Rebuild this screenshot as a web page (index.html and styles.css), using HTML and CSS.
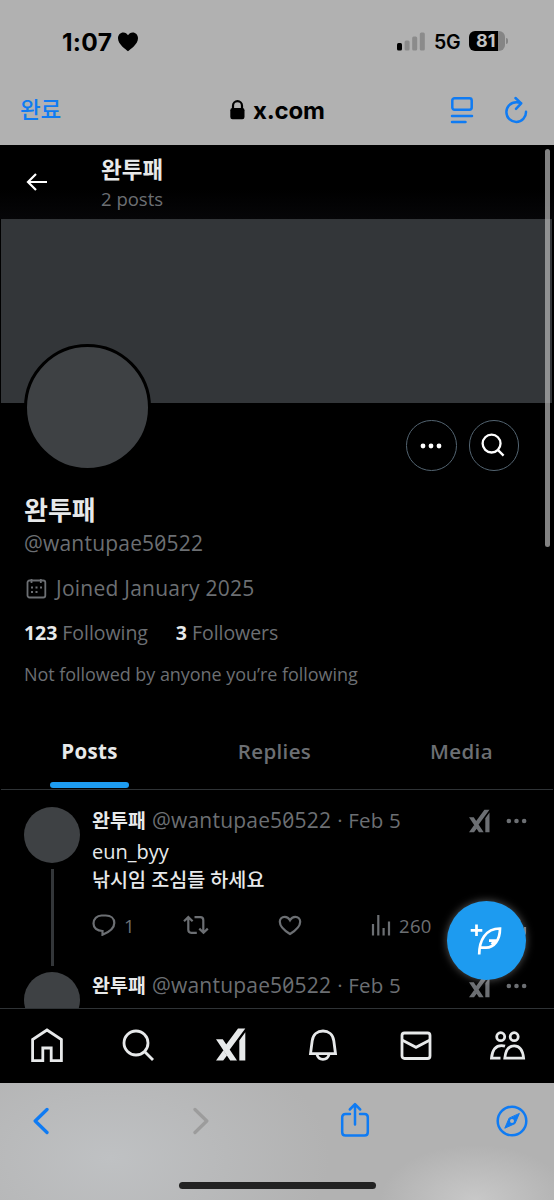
FILE: index.html
```html
<!DOCTYPE html>
<html lang="ko">
<head>
<meta charset="utf-8">
<title>완투패 - x.com</title>
<link rel="stylesheet" href="styles.css">
</head>
<body>
<svg width="0" height="0" class="defs">
  <symbol id="xai" viewBox="0 0 30 33"><path d="M0 11.300h6.800L21 32.500h-6.800zM22 .5h7.300L13.600 21.800 10 16.800zM0 32.500h7.200l3.800-5-3.600-5.300zM23.300 12.500l6-8.200v28.200h-6z"/></symbol>
  <symbol id="dots" viewBox="0 0 22 6"><circle cx="3" cy="3" r="2.400"/><circle cx="11" cy="3" r="2.400"/><circle cx="19" cy="3" r="2.400"/></symbol>
</svg>
<div class="phone">
  <header class="chrome">
    <div class="status">
      <span class="time">1:07</span>
      <svg class="heart" width="20" height="20" viewBox="0 0 20 20"><path d="M10 19.300C8 17.500 0 12.500 0 6.300 0 2.800 2.400.5 5.300.5 7.500.5 9 1.600 10 3.300 11 1.600 12.500.5 14.700.5 17.600.5 20 2.800 20 6.300c0 6.200-8 11.200-10 13z"/></svg>
      <span class="spacer"></span>
      <svg width="28" height="20" viewBox="0 0 28 20"><rect y="11" width="5" height="7.500" rx="1.500"/><g fill="#8b8b8b"><rect x="7.600" y="8.500" width="5" height="10" rx="1.500"/><rect x="15.200" y="4.500" width="5" height="14" rx="1.500"/><rect x="22.800" y=".5" width="5" height="18" rx="1.500"/></g></svg>
      <span class="net">5G</span>
      <span class="battery"><b>81</b></span><i class="nub"></i>
    </div>
    <div class="urlbar">
      <span class="done">완료</span>
      <span class="site"><svg width="15" height="20" viewBox="0 0 15 20"><path d="M3 9V5.700a4.500 4.500 0 0 1 9 0V9" fill="none" stroke="#000" stroke-width="2.200"/><rect x=".3" y="8" width="14.200" height="11.200" rx="2.200"/></svg>x.com</span>
      <svg class="tools blue" width="78" height="28" viewBox="0 0 78 28"><rect x="2.300" y="2.300" width="19.400" height="11.400" rx="2.200"/><path d="M2 20h20M2 26h13.500M76 15.800A9.800 9.800 0 1 1 66.200 6.300c2 0 3 .3 5 1M65.500 2l5.700 5.300-5.200 5.500"/></svg>
    </div>
  </header>
  <main class="app">
    <div class="topbar">
      <svg width="21" height="18" viewBox="0 0 21 18"><path d="M10 1L2 9l8 8M2 9h19" fill="none" stroke="#fff" stroke-width="2.200"/></svg>
      <div><h1>완투패</h1><p>2 posts</p></div>
    </div>
    <div class="banner"></div>
    <section class="profile">
      <div class="profile-top">
        <div class="avatar-lg"></div>
        <div class="round"><svg width="22" height="6"><use href="#dots"/></svg></div>
        <div class="round"><svg width="25" height="25" viewBox="0 0 26 26" fill="none" stroke="#fff" stroke-width="2.400"><circle cx="11" cy="11" r="9.300"/><path d="M17.500 17.500l6 6"/></svg></div>
      </div>
      <h2>완투패</h2>
      <p class="handle zero">@wantupae50522</p>
      <p class="joined"><svg width="21" height="21" viewBox="0 0 21 21"><rect x="1.500" y="2.500" width="17.800" height="17" rx="2" fill="none" stroke="#6c6f73" stroke-width="1.800"/><path d="M5.500 1v4M14.800 1v4" stroke="#6c6f73" stroke-width="1.800"/><path d="M5 9.500h2M9.500 9.500h2M14 9.500h2M5 14h2M9.500 14h2" stroke="#6c6f73" stroke-width="2"/></svg><span>Joined January 2025</span></p>
      <p class="counts"><span><b>123</b> Following</span><span><b>3</b> Followers</span></p>
      <p class="note">Not followed by anyone you’re following</p>
    </section>
    <nav class="tabs"><span class="on">Posts</span><span>Replies</span><span>Media</span></nav>
    <section class="feed">
      <article class="post">
        <div class="rail"><div class="avatar"></div><div class="thread"></div></div>
        <div class="content">
          <div class="meta"><b>완투패</b><span class="handle zero">@wantupae50522</span><span class="date">· Feb 5</span><svg class="xa" width="21" height="24"><use href="#xai"/></svg><svg width="21" height="6"><use href="#dots"/></svg></div>
          <p class="text latin">eun_byy</p>
          <p class="text">낚시임 조심들 하세요</p>
          <div class="actions">
            <span><svg width="24" height="22" viewBox="0 0 24 22"><path d="M10.500 17C5 17 1.500 14 1.500 9.500c0-4.700 3.500-8 8-8h4.300c5 0 8.500 3 8.500 7.500 0 5.500-5 9-11.800 11.800z"/></svg><em>1</em></span>
            <span><svg width="26" height="20" viewBox="0 0 26 20"><path d="M1 6.300l4.300-4.200 4.300 4.200M5.300 2.500v12.300q0 3 3 3h5.500M11.500 2.200h5.800q3 0 3 3v12.300M16.300 13.600l4.200 4.200 4.300-4.200"/></svg></span>
            <span><svg width="24" height="21" viewBox="0 0 24 21"><path d="M12 19C7 16 1.800 12 1.800 6.800c0-3 2-5 4.900-5 2.400 0 4.100 1.300 5.300 3.500 1.200-2.200 2.900-3.500 5.300-3.500 2.900 0 4.900 2 4.900 5C22.200 12 17 16 12 19z"/></svg></span>
            <span><svg width="20" height="21" viewBox="0 0 20 21"><path d="M2 9v11.500M7.300 0v20.500M12.600 13v7.500M18 6.500v14"/></svg><em>260</em></span>
            <span><svg width="24" height="22" viewBox="0 0 24 22"><path d="M12 15V2M7 7l5-5 5 5M2 13v5q0 3 3 3h14q3 0 3-3v-5"/></svg></span>
          </div>
        </div>
      </article>
      <article class="post">
        <div class="rail"><div class="avatar"></div></div>
        <div class="content">
          <div class="meta"><b>완투패</b><span class="handle zero">@wantupae50522</span><span class="date">· Feb 5</span><svg class="xa" width="21" height="24"><use href="#xai"/></svg><svg width="21" height="6"><use href="#dots"/></svg></div>
        </div>
      </article>
    </section>
    <nav class="bottomnav">
      <svg width="34" height="36" viewBox="0 0 34 36"><path d="M17 3L2.600 12.600v21h10.200V21h8.400v12.600h10.200v-21z"/></svg>
      <svg width="34" height="36" viewBox="0 0 34 36"><circle cx="15" cy="16" r="12"/><path d="M23.500 24.500L32 33"/></svg>
      <svg class="fill" width="30" height="33"><use href="#xai"/></svg>
      <svg width="34" height="36" viewBox="0 0 34 36"><path d="M4.500 26.700l1.700-13C7 7.500 11.500 4 17 4s10 3.500 10.800 9.700l1.700 13zM11 27.500c.8 3.200 3.200 4.800 6 4.800s5.200-1.600 6-4.800"/></svg>
      <svg width="34" height="36" viewBox="0 0 34 36"><rect x="3" y="6" width="28" height="25.500" rx="2.500"/><path d="M3 13l14 7.300L31 13"/></svg>
      <svg width="38" height="36" viewBox="0 0 38 36"><circle cx="12.700" cy="9.700" r="4"/><circle cx="26.200" cy="9.700" r="4"/><path d="M16.800 31.200c.8-8.200 4-12.400 9.400-12.400s8.600 4.200 9.400 12.400zM17 19.200c-1.200-.4-2.300-.5-3.500-.5-5.700 0-9.200 4.200-10 12.500h9"/></svg>
    </nav>
    <div class="scrollbar"></div>
    <div class="compose"><svg width="36" height="34" viewBox="0 0 36 34"><path d="M8.500 1.500v11.600M2.700 7.300h11.600M11.200 31.500C11.200 17.500 17.500 5.500 32 5.500 32 17 26 24.700 18 24.700H12.500M21 17.700h7.500M27.500 17.700l-4 3.600"/></svg></div>
  </main>
  <footer class="safari">
    <div class="toolbar">
      <svg class="blue thick" width="16" height="28" viewBox="0 0 16 28"><path d="M14 2.500L2.200 14 14 25.500"/></svg>
      <svg class="grey thick" width="16" height="28" viewBox="0 0 16 28"><path d="M2 2.500L13.800 14 2 25.500"/></svg>
      <svg class="blue share" width="30" height="36" viewBox="0 0 30 36"><path d="M10 12H5.500Q2.200 12 2.200 15.300v15q0 3.300 3.300 3.300h19q3.300 0 3.300-3.300v-15Q27.800 12 24.500 12H20M15 22.500V2.500M9.800 7.500L15 2.200l5.200 5.300"/></svg>
      <svg class="blue" width="32" height="32" viewBox="0 0 32 32"><circle cx="16" cy="16" r="14.300"/><path d="M23.200 8.800L19 18.600 8.800 23.200 13 13.400z" fill="#0f7bf3" stroke-width="1"/><circle cx="16" cy="16" r="2" fill="#b5b5b5" stroke="none"/></svg>
    </div>
    <div class="home-indicator"></div>
  </footer>
</div>
</body>
</html>
```
FILE: styles.css
```css
* { box-sizing: border-box; margin: 0; padding: 0; }
body { background: #000; font-family: "Open Sans", "Noto Sans CJK KR", sans-serif; }
svg { display: block; flex: none; }
.defs { position: absolute; }
.phone { width: 554px; height: 1200px; display: flex; flex-direction: column; overflow: hidden; }
.blue { fill: none; stroke: #0f7bf3; stroke-width: 2.5; stroke-linecap: round; stroke-linejoin: round; }
.grey { fill: none; stroke: #9c9c9c; stroke-linecap: round; stroke-linejoin: round; }
.thick { stroke-width: 3.3; }

.chrome { height: 145px; background: #b1b1b1; color: #000; font-family: Inter, "Noto Sans CJK KR", sans-serif; }
.status { height: 84px; padding: 0 46px 0 62px; display: flex; align-items: center; }
.time { font-size: 24.5px; font-weight: 700; letter-spacing: .3px; width: 56px; margin-top: -1px; }
.heart { margin-top: -1px; }
.spacer { flex: 1; }
.net { font-size: 19.5px; font-weight: 600; width: 35px; margin-left: 9px; letter-spacing: -.2px; }
.battery { width: 36px; height: 20px; border-radius: 6px; background: linear-gradient(90deg, #000 29px, #858585 29px); color: #c4c4c4; font-size: 18px; line-height: 20px; padding-left: 7px; margin-top: -2px; }
.battery b { font-weight: 700; }
.nub { width: 2px; height: 6px; margin: -2px 0 0 1px; border-radius: 0 2px 2px 0; background: #858585; }
.urlbar { height: 52px; padding: 0 26px 0 20px; display: grid; grid-template-columns: 210px 210px 1fr; align-items: center; }
.done { color: #0f7bf3; font-size: 22.5px; font-weight: 500; letter-spacing: -.3px; line-height: 30px; }
.site { display: flex; align-items: center; gap: 8px; font-size: 24px; font-weight: 700; letter-spacing: -.2px; }
.tools { justify-self: end; }

.app { position: relative; height: 938px; color: #e7e9ea; display: flex; flex-direction: column; }
.topbar { height: 74px; padding: 5px 0 0 26px; display: flex; align-items: center; gap: 54px; background: linear-gradient(#000 60%, #060608); }
.topbar svg { margin-top: -5px; }
.topbar h1 { font-size: 22.5px; line-height: 30px; font-weight: 700; margin-top: -1px; }
.topbar p { font-size: 18.5px; line-height: 28px; color: #6c6f73; }
.banner { height: 184px; margin: 0 2px 0 1px; background: #333639; }
.profile { height: 312px; padding: 0 24px; color: #6c6f73; }
.profile-top { height: 85px; display: flex; gap: 12px; padding-right: 11px; align-items: center; }
.avatar-lg { width: 127px; height: 127px; border: 3px solid #000; border-radius: 50%; background: #3e4144; margin: -77px auto 0 0; position: relative; }
.round { width: 50.5px; height: 50.5px; border: 1.5px solid #536471; border-radius: 50%; display: flex; align-items: center; justify-content: center; fill: #fff; }
.profile h2 { color: #e7e9ea; font-size: 26px; line-height: 40px; margin-top: 2px; font-weight: 700; }
.handle { font-size: 21px; line-height: 27px; letter-spacing: .2px; }
.joined { display: flex; align-items: center; gap: 9px; font-size: 21px; line-height: 30px; margin: 16px 0 0 2px; letter-spacing: .25px; }
.counts { display: flex; gap: 28px; font-size: 19.5px; line-height: 28px; margin-top: 16px; letter-spacing: -.05px; }
.counts b { color: #e7e9ea; }
.note { font-size: 18px; line-height: 26px; margin-top: 14px; letter-spacing: -.05px; }
.zero { font-feature-settings: "zero"; }
.tabs { height: 75px; border-bottom: 1.5px solid #2f3336; display: grid; grid-template-columns: 177px 193px 181px; margin: 0 1px; font-size: 20.5px; font-weight: 600; color: #6c6f73; letter-spacing: .35px; }
.tabs span { height: 74px; line-height: 73px; text-align: center; }
.tabs .on { color: #e7e9ea; font-weight: 700; }
.tabs .on::after { content: ""; display: block; width: 79px; height: 6px; border-radius: 3px; background: #1d9bf0; margin: -6px auto 0; }
.feed { flex: 1; overflow: hidden; padding: 17px 27px 0 24px; }
.post { display: flex; gap: 12px; height: 165px; color: #6c6f73; }
.rail { width: 56px; display: flex; flex-direction: column; align-items: center; gap: 6px; }
.avatar { width: 56px; height: 56px; border-radius: 50%; background: #3e4144; flex: none; }
.thread { width: 3px; height: 97px; background: #333639; }
.content { flex: 1; min-width: 0; }
.meta { height: 27px; display: flex; align-items: center; font-size: 20.5px; fill: #6c6f73; }
.meta b { color: #e7e9ea; font-size: 19.5px; width: 60px; line-height: 27px; margin-top: -1px; }
.meta .handle, .meta .date { margin-top: -1px; }
.date { padding-left: 6px; letter-spacing: .2px; }
.xa { margin: 0 16px 0 auto; }
.text { color: #e7e9ea; font-size: 19.6px; line-height: 27px; font-weight: 500; }
.latin { margin-top: 4px; font-size: 20px; font-weight: 400; }
.latin + .text { padding-top: 1px; height: 27px; }
.actions { margin-top: 20px; height: 26px; display: grid; grid-template-columns: 91px 95px 93px 131.5px 24px; align-items: center; }
.actions span { display: flex; align-items: center; gap: 8px; }
.actions svg { fill: none; stroke: #6c6f73; stroke-width: 2.2; }
.actions em { font-style: normal; font-size: 18.5px; letter-spacing: .3px; }
.bottomnav { height: 75px; border-top: 1.5px solid #2f3336; background: #000; display: grid; grid-template-columns: 90.5px 95.500px 90px 93px 89px 38px; align-items: center; padding: 0 27px 2px 30px; }
.bottomnav svg { fill: none; stroke: #e7e9ea; stroke-width: 2.8; }
.bottomnav .fill { fill: #e7e9ea; stroke: none; margin-top: -2px; }
.scrollbar { position: absolute; left: 545px; top: 4px; width: 5px; height: 398px; border-radius: 3px; background: rgba(180,180,180,.72); }
.compose { position: absolute; left: 446.5px; top: 755.5px; width: 79px; height: 79px; border-radius: 50%; background: #1d9bf0; box-shadow: 0 0 8px rgba(255,255,255,.35); display: flex; align-items: center; justify-content: center; }
.compose svg { fill: none; stroke: #fff; stroke-width: 2.7; }
.safari { height: 117px; position: relative; background: radial-gradient(ellipse 95px 55px at 475px 117px, #c8c8c8, transparent), radial-gradient(ellipse 220px 130px at 110px 75px, #bfc1c3, transparent), #b2b2b2; }
.toolbar { height: 76px; display: grid; grid-template-columns: 160px 147px 155.5px 32px; align-items: center; padding-left: 33px; }
.share { margin-top: -2px; }
.home-indicator { position: absolute; left: 179px; top: 99px; width: 197px; height: 7px; border-radius: 4px; background: #222; }
```
